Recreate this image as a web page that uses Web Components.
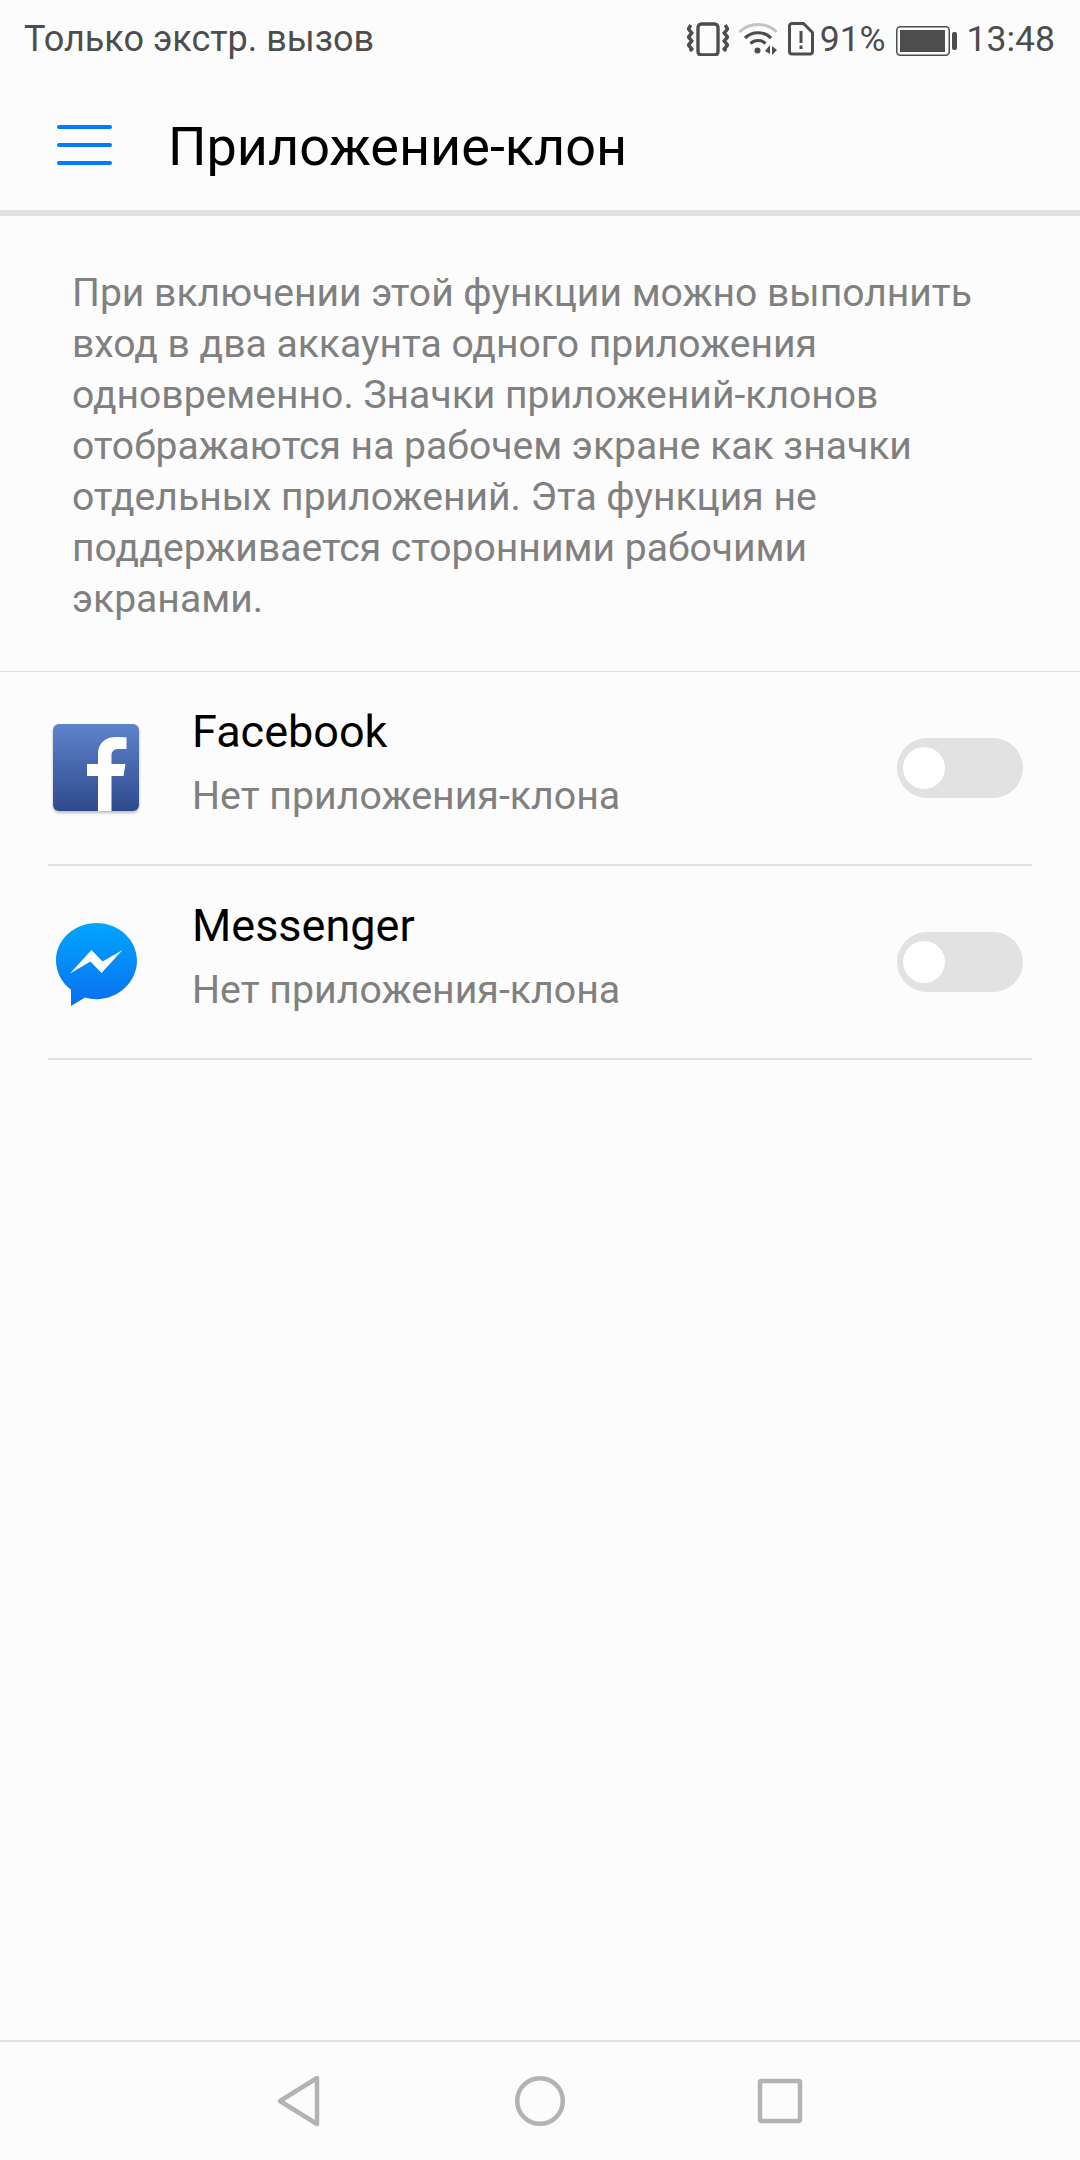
<!DOCTYPE html>
<html lang="ru"><head><meta charset="utf-8"><title>Приложение-клон</title>
<style>
html,body{margin:0;padding:0;background:#fcfcfc}
body{font-family:Roboto,"Noto Sans",sans-serif}
clone-screen{height:2160px}
</style></head><body>
<clone-screen>
  <status-bar></status-bar>
  <app-toolbar>Приложение-клон</app-toolbar>
  <intro-text>При включении этой функции можно выполнить<br>вход в два аккаунта одного приложения<br>одновременно. Значки приложений-клонов<br>отображаются на рабочем экране как значки<br>отдельных приложений. Эта функция не<br>поддерживается сторонними рабочими<br>экранами.</intro-text>
  <app-row name="Facebook" sub="Нет приложения-клона">
    <svg slot="icon" width="100" height="100" viewBox="0 0 100 100">
      <defs>
        <linearGradient id="fb" x1="0" y1="0" x2="0" y2="1"><stop offset="0" stop-color="#5d83cd"/><stop offset="1" stop-color="#2f4a8c"/></linearGradient>
        <clipPath id="fc"><rect x="7" y="6" width="86" height="87" rx="6"/></clipPath>
        <filter id="fs" x="-10%" y="-10%" width="120%" height="120%"><feGaussianBlur stdDeviation="1.500"/></filter>
      </defs>
      <rect x="7" y="8" width="86" height="87" rx="6" fill="#000" opacity=".25" filter="url(#fs)"/>
      <rect x="7" y="6" width="86" height="87" rx="6" fill="url(#fb)"/>
      <path clip-path="url(#fc)" d="M52 93V58H41V46H52V36C52 25 59.500 19 70 19C75 19 79 19.300 80.500 19.500V31H73C67.500 31 65.500 33.500 65.500 37.500V46H79.500L77.500 58H65.500V93Z" fill="#fff"/>
    </svg>
  </app-row>
  <app-row name="Messenger" sub="Нет приложения-клона">
    <svg slot="icon" width="100" height="100" viewBox="0 0 100 100">
      <defs><linearGradient id="ms" x1="0" y1="0" x2="0" y2="1"><stop offset="0" stop-color="#00a6ff"/><stop offset="1" stop-color="#0a6ff0"/></linearGradient></defs>
      <path d="M50.500 11C28.200 11 10 27.700 10 48.500C10 60.300 15.900 70.800 25 77.700V94L39 85.600C42.900 86.700 46.600 87.200 50.500 87.200C72.800 87.200 91 69.600 91 48.800C91 27.800 72.800 11 50.500 11Z" fill="url(#ms)"/>
      <path d="M24 61.500L45.500 38L56.500 49.500L76.500 38L55.500 61L44.500 49.500Z" fill="#fff"/>
    </svg>
  </app-row>
  <nav-bar></nav-bar>
</clone-screen>
<template id="t-screen"><style>:host{display:flex;flex-direction:column;background:#fcfcfc}
::slotted(nav-bar){margin-top:auto}</style><slot></slot></template>
<template id="t-status"><style>
:host{display:flex;align-items:center;height:78px;padding:0 25px 0 24px;box-sizing:border-box;color:#4d4d4d;font-size:36px;line-height:78px}
.l{flex:1;white-space:nowrap}
.r{display:flex;align-items:center;height:78px}
svg{display:block}
.pct{margin:0 10px 0 6px;font-size:35.500px}
.time{margin-left:9px;font-size:35.500px}
</style>
<span class="l">Только экстр. вызов</span>
<span class="r">
<svg width="42" height="34" viewBox="0 0 44 34" preserveAspectRatio="none" style="margin-right:9px"><rect x="11.500" y="2" width="21" height="31" rx="3.500" fill="none" stroke="#4d4d4d" stroke-width="3.500"/><path d="M4 3L1.500 7L5 11L1.500 15L5 19L1.500 23L5 27L3 29M40 3L42.500 7L39 11L42.500 15L39 19L42.500 23L39 27L41 29" fill="none" stroke="#4d4d4d" stroke-width="3.500"/></svg>
<svg width="40" height="34" viewBox="0 0 40 34" style="margin-right:10px"><path d="M1.500 10C11 0 29 0 38.500 10" fill="none" stroke="#c4c4c4" stroke-width="3.200"/><path d="M7 16C14 9 26 9 33 16M12.500 21.500C16.500 17.500 23.500 17.500 27.500 21.500" fill="none" stroke="#4d4d4d" stroke-width="3.200"/><circle cx="19.500" cy="28.500" r="3" fill="#4d4d4d"/><path d="M32 23V32L27 29ZM34 24V33L39 28Z" fill="#4d4d4d"/></svg>
<svg width="26" height="34" viewBox="0 0 26 34"><path d="M4 1.500H15.500L24.500 10.500V29.500A2.500 2.500 0 0 1 22 32H4A2.500 2.500 0 0 1 1.500 29.500V4A2.500 2.500 0 0 1 4 1.500Z" fill="none" stroke="#4d4d4d" stroke-width="3"/><rect x="11.500" y="9" width="3" height="12" fill="#4d4d4d"/><rect x="11.500" y="23.500" width="3" height="3.500" fill="#4d4d4d"/></svg>
<span class="pct">91%</span>
<svg width="62" height="30" viewBox="0 0 62 30" style="margin-top:4px"><rect x=".75" y=".75" width="52.500" height="28.500" rx="3.500" fill="none" stroke="#4d4d4d" stroke-width="1.500"/><rect x="4" y="4" width="45" height="22" fill="#4d4d4d"/><rect x="56" y="6" width="5" height="18" rx="2" fill="#4d4d4d"/></svg>
<span class="time">13:48</span>
</span></template>
<template id="t-toolbar"><style>
:host{display:flex;align-items:center;padding:5px 0 0 57px;box-sizing:border-box;border-bottom:6px solid #e2e2e2;color:#000;font-size:54px;height:138px}
.m{display:flex;flex-direction:column;gap:14px;width:55px;margin:-4px 56px 0 0}
.m i{display:block;height:4px;border-radius:2px;background:#007dff}
.t{white-space:nowrap}
</style><span class="m"><i></i><i></i><i></i></span><span class="t"><slot></slot></span></template>
<template id="t-intro"><style>
:host{display:block;box-sizing:border-box;height:456px;padding:52px 72px 0;border-bottom:1px solid #dedede;color:#808080;font-size:39.100px;line-height:51px;white-space:nowrap}
</style><slot></slot></template>
<template id="t-row"><style>
:host{display:block;height:194px;box-sizing:border-box;padding:0 48px}
.w{display:flex;align-items:center;height:194px;box-sizing:border-box;border-bottom:2px solid #e2e2e2}
.i{width:100px;height:100px;margin-left:-2px;margin-right:46px;flex:none}
::slotted(svg){display:block}
.x{flex:1;display:flex;flex-direction:column;margin-top:-9px}
.n{font-size:45px;line-height:52px;color:#000}
.s{font-size:39.300px;line-height:52px;color:#808080;margin-top:12px}
.k{width:126px;height:60px;border-radius:30px;background:#e2e2e2;margin-right:9px;display:flex;align-items:center;padding-left:6px;box-sizing:border-box}
.k i{width:42px;height:42px;border-radius:50%;background:#fff;display:block}
</style><div class="w"><div class="i"><slot name="icon"></slot></div><div class="x"><span class="n"></span><span class="s"></span></div><div class="k"><i></i></div></div></template>
<template id="t-nav"><style>
:host{display:flex;align-items:center;justify-content:center;box-sizing:border-box;height:120px;border-top:2px solid #e2e2e2;gap:0}
.c{display:flex;justify-content:center;width:240px}
svg{display:block}
</style>
<div class="c"><svg width="50" height="54" viewBox="0 0 50 54"><path d="M42 4L5 27L42 50Z" fill="none" stroke="#b3b3b3" stroke-width="4.500" stroke-linejoin="round"/></svg></div>
<div class="c"><svg width="54" height="54" viewBox="0 0 54 54"><circle cx="27" cy="27" r="22.800" fill="none" stroke="#b3b3b3" stroke-width="4.500"/></svg></div>
<div class="c"><svg width="50" height="50" viewBox="0 0 50 50"><rect x="5" y="5" width="40" height="40" rx="1.500" fill="none" stroke="#b3b3b3" stroke-width="4.500"/></svg></div>
</template>
<script>
function def(tag,tid,init){customElements.define(tag,class extends HTMLElement{constructor(){super();const s=this.attachShadow({mode:"open"});s.appendChild(document.getElementById(tid).content.cloneNode(true));}connectedCallback(){if(init)init(this,this.shadowRoot);}});}
def("clone-screen","t-screen");
def("status-bar","t-status");
def("app-toolbar","t-toolbar");
def("intro-text","t-intro");
def("app-row","t-row",(h,s)=>{s.querySelector(".n").textContent=h.getAttribute("name");s.querySelector(".s").textContent=h.getAttribute("sub");});
def("nav-bar","t-nav");
</script>
</body></html>
